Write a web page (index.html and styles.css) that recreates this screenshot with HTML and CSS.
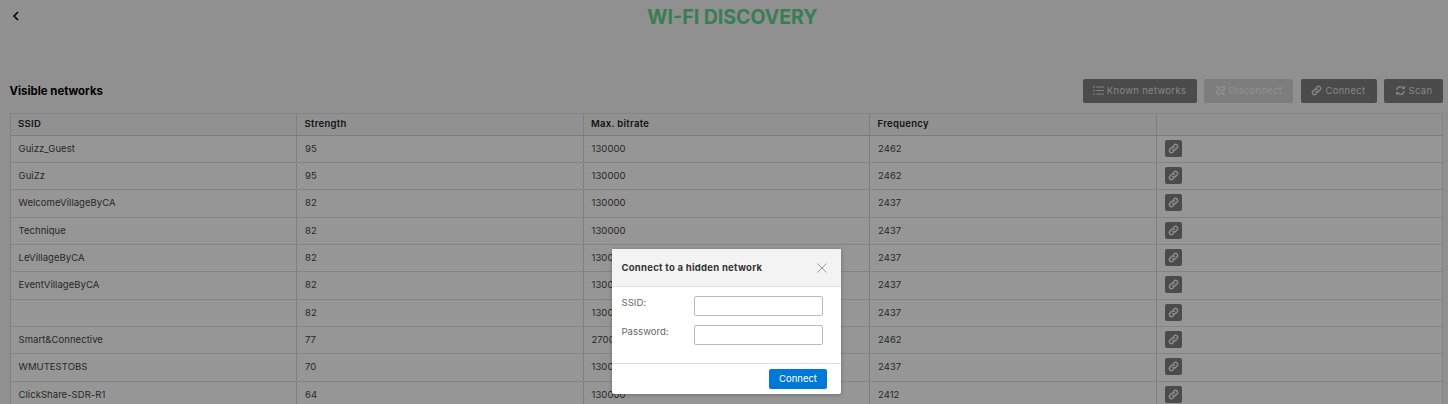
FILE: index.html
```html
<!DOCTYPE html>
<html lang="en">
<head>
<meta charset="utf-8">
<title>Wi-Fi Discovery</title>
<link rel="stylesheet" href="styles.css">
</head>
<body>
<svg class="sprite" width="0" height="0" aria-hidden="true">
  <symbol id="i-link" viewBox="0 0 16 16"><path d="M6.600 9.400a3 3 0 0 0 4.200 0l2.600-2.600a3 3 0 0 0-4.200-4.200L8 3.800M9.400 6.600a3 3 0 0 0-4.200 0L2.600 9.200a3 3 0 0 0 4.200 4.200L8 12.200" fill="none" stroke="currentColor" stroke-width="2" stroke-linecap="round"/></symbol>
  <symbol id="i-list" viewBox="0 0 16 16"><path d="M5 3H16M5 8H16M5 13H16M0 3H3M0 8H3M0 13H3" fill="none" stroke="currentColor" stroke-width="1.600"/></symbol>
  <symbol id="i-unlink" viewBox="0 0 16 16"><path d="M9 3.500l1-1a3 3 0 0 1 3.800 3.800L12 8M7 12.500l-1 1a3 3 0 0 1-3.800-3.800L4 8M2 2l12 12M4 2.500 6 5M12 13.500 10 11" fill="none" stroke="currentColor" stroke-width="1.900" stroke-linecap="round"/></symbol>
  <symbol id="i-sync" viewBox="0 0 16 16"><path d="M2.500 7a5.700 5.700 0 0 1 9.800-2.800M13.500 9a5.700 5.700 0 0 1-9.800 2.800" fill="none" stroke="currentColor" stroke-width="2"/><path d="M14.500 1v5h-5zM1.500 15v-5h5z" fill="currentColor"/></symbol>
</svg>

<header class="topbar">
  <svg class="back" viewBox="0 0 10 12" width="10" height="12" aria-hidden="true"><path d="M7 2 3 6l4 4" fill="none" stroke="currentColor" stroke-width="1.700"/></svg>
  <h1 class="title">WI-FI DISCOVERY</h1>
</header>

<main class="content">
  <div class="toolbar">
    <h2 class="section-title">Visible networks</h2>
    <div class="actions">
      <button class="btn btn-known"><svg class="ic"><use href="#i-list"/></svg>Known networks</button>
      <button class="btn btn-disabled"><svg class="ic"><use href="#i-unlink"/></svg>Disconnect</button>
      <button class="btn btn-connect"><svg class="ic"><use href="#i-link"/></svg>Connect</button>
      <button class="btn btn-scan"><svg class="ic"><use href="#i-sync"/></svg>Scan</button>
    </div>
  </div>

  <table class="networks">
    <thead>
      <tr><th>SSID</th><th>Strength</th><th>Max. bitrate</th><th>Frequency</th><th></th></tr>
    </thead>
    <tbody>
      <tr><td>Guizz_Guest</td><td>95</td><td>130000</td><td>2462</td><td><span class="mini"><svg><use href="#i-link"/></svg></span></td></tr>
      <tr><td>GuiZz</td><td>95</td><td>130000</td><td>2462</td><td><span class="mini"><svg><use href="#i-link"/></svg></span></td></tr>
      <tr><td>WelcomeVillageByCA</td><td>82</td><td>130000</td><td>2437</td><td><span class="mini"><svg><use href="#i-link"/></svg></span></td></tr>
      <tr><td>Technique</td><td>82</td><td>130000</td><td>2437</td><td><span class="mini"><svg><use href="#i-link"/></svg></span></td></tr>
      <tr><td>LeVillageByCA</td><td>82</td><td>130000</td><td>2437</td><td><span class="mini"><svg><use href="#i-link"/></svg></span></td></tr>
      <tr><td>EventVillageByCA</td><td>82</td><td>130000</td><td>2437</td><td><span class="mini"><svg><use href="#i-link"/></svg></span></td></tr>
      <tr><td></td><td>82</td><td>130000</td><td>2437</td><td><span class="mini"><svg><use href="#i-link"/></svg></span></td></tr>
      <tr><td>Smart&amp;Connective</td><td>77</td><td>270000</td><td>2462</td><td><span class="mini"><svg><use href="#i-link"/></svg></span></td></tr>
      <tr><td>WMUTESTOBS</td><td>70</td><td>130000</td><td>2437</td><td><span class="mini"><svg><use href="#i-link"/></svg></span></td></tr>
      <tr><td>ClickShare-SDR-R1</td><td>64</td><td>130000</td><td>2412</td><td><span class="mini"><svg><use href="#i-link"/></svg></span></td></tr>
    </tbody>
  </table>
</main>

<div class="backdrop"></div>

<section class="modal">
  <div class="modal-head">
    <h3 class="modal-title">Connect to a hidden network</h3>
    <svg class="close" viewBox="0 0 12 12" width="12" height="12" aria-hidden="true"><path d="M1.500 1.500l9 9M10.500 1.500l-9 9" fill="none" stroke="currentColor" stroke-width="1"/></svg>
  </div>
  <div class="modal-body">
    <div class="field"><label class="lbl">SSID:</label><input class="inp" type="text"></div>
    <div class="field"><label class="lbl">Password:</label><input class="inp" type="password"></div>
  </div>
  <div class="modal-foot"><button class="primary">Connect</button></div>
</section>
</body>
</html>
```

FILE: styles.css
```css
* { box-sizing: border-box; }
html, body { margin: 0; height: 404px; overflow: hidden; }
body {
  background: #f0f0f0;
  font-family: Inter, "Noto Sans", sans-serif;
  font-size: 9.500px;
  letter-spacing: .05px;
  color: #444;
  position: relative;
}
.sprite { position: absolute; }
.topbar { height: 79px; padding: 0 10px; position: relative; }
.back { position: absolute; left: 11px; top: 10px; color: #111; }
.title {
  margin: 0;
  padding: 6px 0 0 17px;
  text-align: center;
  font-size: 19.500px;
  line-height: 22px;
  font-weight: 700;
  color: #5fd08a;
  letter-spacing: 0;
}
.content { padding: 0 5px 0 9.500px; }
.toolbar { display: flex; justify-content: space-between; align-items: center; height: 24px; margin-bottom: 9.500px; }
.section-title { margin: 0; font-size: 11.400px; font-weight: 700; color: #000; letter-spacing: 0; }
.actions { display: flex; gap: 7.500px; }
.btn {
  height: 24px;
  border: 0;
  border-radius: 2px;
  background: #7d7d7d;
  color: #dedede;
  font: inherit;
  letter-spacing: .3px;
  display: flex;
  align-items: center;
  justify-content: center;
  gap: 3px;
  padding: 0 0 1px;
}
.btn-known { width: 114px; }
.btn-disabled { width: 89px; background: #d0d0d0; color: #f2f2f2; }
.btn-connect { width: 76px; }
.btn-scan { width: 59px; }
.ic { width: 11px; height: 11px; flex: none; }
.networks { width: 1433.500px; border-collapse: collapse; table-layout: fixed; border: 1px solid #dcdcdc; background: #fafafa; }
.networks th {
  height: 22px;
  padding: 0 7.500px 2px;
  text-align: left;
  font-size: 9.500px;
  font-weight: 600;
  letter-spacing: .3px;
  background: #f2f2f2;
  color: #222;
  border-left: 1px solid #d4d4d4;
  border-bottom: 1px solid #cfcfcf;
}
.networks td {
  height: 27.350px;
  padding: 0 8px 1px;
  border-left: 1px solid #d4d4d4;
  border-bottom: 1px solid #dcdcdc;
  vertical-align: middle;
  white-space: nowrap;
}
.mini {
  display: flex;
  width: 17px;
  height: 17px;
  border-radius: 2px;
  background: #7d7d7d;
  color: #f0f0f0;
  align-items: center;
  justify-content: center;
}
.mini svg { width: 11px; height: 11px; }
.backdrop { position: absolute; inset: 0; background: rgba(0, 0, 0, .4); }
.modal {
  position: absolute;
  left: 612px;
  top: 249px;
  width: 229px;
  height: 145px;
  background: #fff;
  border-radius: 2px;
  box-shadow: 0 1px 4px rgba(0, 0, 0, .25);
  display: flex;
  flex-direction: column;
}
.modal-head {
  height: 38px;
  flex: none;
  background: #f3f3f3;
  border-bottom: 1px solid #e2e2e2;
  display: flex;
  align-items: center;
  justify-content: space-between;
  padding: 0 13px 0 9.500px;
}
.modal-title { margin: 0; font-size: 9.500px; font-weight: 700; color: #333; letter-spacing: .26px; }
.close { color: #999; }
.modal-body { flex: 1; padding: 9px 18px 0 9.500px; display: flex; flex-direction: column; gap: 9px; }
.field { display: flex; justify-content: space-between; align-items: flex-start; }
.lbl { color: #666; line-height: 14px; }
.inp { width: 129px; height: 20px; border: 1px solid #bbb; border-radius: 2px; background: #fff; padding: 0 4px; }
.modal-foot { height: 31px; flex: none; border-top: 1px solid #ddd; display: flex; align-items: center; justify-content: flex-end; padding: 0 14px; }
.primary { width: 58px; height: 20px; border: 0; border-radius: 2px; background: #0078d7; color: #fff; font: inherit; padding: 0 0 1px; }
```
